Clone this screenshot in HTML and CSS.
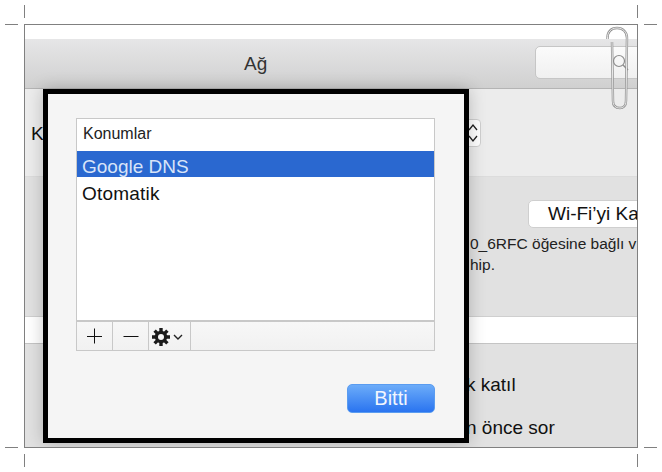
FILE: index.html
```html
<!DOCTYPE html>
<html lang="tr">
<head>
  <meta charset="UTF-8">
  <title>Ağ</title>
  <link rel="stylesheet" href="styles.css">
</head>
<body>
<div class="sheet">
  <!-- kesim izleri -->
  <span class="mark v tl"></span><span class="mark h tl2"></span>
  <span class="mark v tr"></span><span class="mark h tr2"></span>
  <span class="mark v bl"></span><span class="mark h bl2"></span>
  <span class="mark v br"></span><span class="mark h br2"></span>

  <div class="frame">
    <div class="window">
      <div class="titlebar">
        <div class="title">Ağ</div>
        <div class="search">
          <svg width="20" height="20" viewBox="0 0 20 20"><circle cx="8" cy="8" r="5.5" fill="none" stroke="#8c8c8c" stroke-width="1.2"/><path d="M12 12l5 5" stroke="#8c8c8c" stroke-width="1.4"/></svg>
        </div>
      </div>

      <div class="location-row">
        <span class="location-label">Ko</span>
        <div class="stepper">
          <svg width="10" height="22" viewBox="0 0 10 22"><path d="M1 8l4-5 4 5M1 14l4 5 4-5" fill="none" stroke="#222" stroke-width="1.3"/></svg>
        </div>
      </div>

      <div class="panel">
        <div class="wifi-row"><button class="wifi-btn">Wi-Fi’yi Ka</button></div>
        <p class="status">0_6RFC öğesine bağlı v</p>
        <p class="status status-2">hip.</p>
        <div class="white-strip"></div>
        <p class="option option-1">k katıl</p>
        <p class="option option-2">n önce sor</p>
      </div>
    </div>

    <!-- Konumlar penceresi -->
    <div class="dialog">
      <div class="list">
        <div class="list-head">Konumlar</div>
        <div class="list-item selected">Google DNS</div>
        <div class="list-item">Otomatik</div>
        <div class="list-fill"></div>
        <div class="toolbar">
          <div class="tool">
            <svg width="18" height="18" viewBox="0 0 18 18"><path d="M8.5 1.5v15M1 9.5h15" stroke="#111" stroke-width="1"/></svg>
          </div>
          <div class="tool">
            <svg width="18" height="18" viewBox="0 0 18 18"><path d="M1.5 9.5h15" stroke="#111" stroke-width="1"/></svg>
          </div>
          <div class="tool tool-gear">
            <svg width="20" height="20" viewBox="0 0 20 20">
              <g stroke="#1a1a1a" stroke-width="3.4">
                <path d="M10 1v18M1 10h18M3.6 3.6l12.8 12.8M16.4 3.6L3.6 16.4"/>
              </g>
              <circle cx="10" cy="10" r="6.2" fill="#1a1a1a"/>
              <circle cx="10" cy="10" r="3" fill="#f5f5f5"/>
            </svg>
            <svg width="10" height="7" viewBox="0 0 10 7"><path d="M1 1l4 4 4-4" fill="none" stroke="#222" stroke-width="1.4"/></svg>
          </div>
        </div>
      </div>
      <div class="actions"><button class="done-btn">Bitti</button></div>
    </div>

    <svg class="clip" width="26" height="84" viewBox="0 0 26 84">
      <path d="M2.5 13C2 6 6 2 12 2c6 0 10 4 10 10l-1 63c0 5-3 7-6 7-4 0-7-2-7-7L7 16" fill="none" stroke="#8f8f8f" stroke-width="2.4"/>
      <path d="M2.5 13C2 6 6 2 12 2c6 0 10 4 10 10l-1 63c0 5-3 7-6 7-4 0-7-2-7-7L7 16" fill="none" stroke="#f4f4f4" stroke-width="0.9"/>
    </svg>
  </div>
</div>
</body>
</html>
```

FILE: styles.css
```css
/* genel */
html, body {
  margin: 0;
  padding: 0;
  background: #fff;
}
body {
  font-family: "Liberation Sans", Arial, sans-serif;
  color: #111;
  overflow: hidden;
}
.sheet {
  position: relative;
  width: 662px;
  height: 472px;
  padding: 24px 0 0 24px;
  box-sizing: border-box;
}

/* kesim izleri */
.mark {
  position: absolute;
  background: #808080;
}
.mark.v { width: 1px; height: 13px; }
.mark.h { width: 13px; height: 1px; }
.tl { left: 24px; top: 5px; }
.tr { left: 637px; top: 5px; }
.bl { left: 24px; top: 454px; }
.br { left: 637px; top: 454px; }
.tl2 { left: 5px; top: 24px; }
.tr2 { left: 644px; top: 24px; }
.bl2 { left: 5px; top: 447px; }
.br2 { left: 644px; top: 447px; }

/* çerçeve */
.frame {
  position: relative;
  width: 612px;
  height: 422px;
  border: 1px solid #808080;
  background: #fff;
  overflow: hidden;
}
.window {
  padding-top: 14px;
  height: 100%;
  box-sizing: border-box;
  display: flex;
  flex-direction: column;
}
.titlebar {
  height: 49px;
  flex: none;
  display: flex;
  align-items: center;
  justify-content: flex-end;
  position: relative;
  background: linear-gradient(#e6e6e7, #d0d0d0);
  border-bottom: 1px solid #b4b4b4;
}
.title {
  position: absolute;
  left: 219px;
  top: 14px;
  font-size: 19px;
  color: #333;
}
.search {
  width: 108px;
  height: 33px;
  margin-right: -6px;
  margin-top: -3px;
  box-sizing: border-box;
  padding: 6px 0 0 75px;
  background: linear-gradient(#fbfbfb, #f0f0f0);
  border: 1px solid #c6c6c6;
  border-radius: 5px;
}
.location-row {
  height: 88px;
  flex: none;
  display: flex;
  justify-content: space-between;
  box-sizing: border-box;
  padding: 30px 0 0 6px;
  background: #ececec;
  border-bottom: 1px solid #dcdcdc;
}
.location-label {
  font-size: 19px;
  line-height: 30px;
}
.stepper {
  width: 30px;
  height: 28px;
  margin-right: 156px;
  display: flex;
  align-items: center;
  justify-content: flex-end;
  padding-right: 2px;
  box-sizing: border-box;
  background: #fff;
  border: 1px solid #cfcfcf;
  border-radius: 4px;
}
.panel {
  flex: 1;
  background: #e1e1e1;
  padding-top: 23px;
}
.wifi-row {
  height: 28px;
  padding-left: 503px;
}
.wifi-btn {
  width: 140px;
  height: 28px;
  padding: 0 0 0 19px;
  text-align: left;
  font: 19px "Liberation Sans", Arial, sans-serif;
  white-space: nowrap;
  color: #111;
  background: #fff;
  border: 1px solid #cfcfcf;
  border-radius: 5px;
}
.status {
  margin: 5px 0 0 445px;
  font-size: 15.5px;
  line-height: 21px;
  white-space: nowrap;
  color: #222;
}
.status-2 {
  margin-top: 0;
}
.white-strip {
  height: 26px;
  margin-top: 41px;
  background: #fff;
  border-top: 1px solid #cfcfcf;
  border-bottom: 1px solid #c4c4c4;
}
.option {
  margin: 0;
  font-size: 19px;
  line-height: 24px;
  white-space: nowrap;
}
.option-1 {
  margin: 29px 0 0 441px;
}
.option-2 {
  margin: 19px 0 0 441px;
}

/* Konumlar penceresi */
.dialog {
  position: absolute;
  left: 18px;
  top: 64px;
  width: 426px;
  height: 354px;
  box-sizing: border-box;
  padding: 24px 29px 0 28px;
  background: #f5f5f5;
  border: 5px solid #000;
  box-shadow: 0 0 16px rgba(0, 0, 0, 0.22);
}
.list {
  height: 233px;
  box-sizing: border-box;
  display: flex;
  flex-direction: column;
  background: #fff;
  border: 1px solid #c8c8c8;
}
.list-head {
  height: 32px;
  flex: none;
  padding-left: 6px;
  box-sizing: border-box;
  font-size: 16px;
  line-height: 30px;
  color: #222;
}
.list-item {
  height: 27px;
  flex: none;
  padding-left: 5px;
  font-size: 19px;
  line-height: 34px;
  letter-spacing: 0.2px;
  color: #111;
}
.list-item.selected {
  height: 26px;
  line-height: 32px;
  letter-spacing: 0;
  background: #2a68d0;
  color: #d8e4f8;
}
.list-fill {
  flex: 1;
}
.toolbar {
  height: 28px;
  flex: none;
  display: flex;
  background: linear-gradient(#f7f7f7, #f1f1f1);
  border-top: 2px solid #c8c8c8;
}
.tool {
  width: 35px;
  display: flex;
  align-items: center;
  justify-content: center;
  border-right: 1px solid #c8c8c8;
}
.tool-gear {
  width: 41px;
  gap: 2px;
  justify-content: flex-start;
  padding: 2px 0 0 2px;
  box-sizing: content-box;
  width: 39px;
}

.actions {
  display: flex;
  justify-content: flex-end;
  margin-top: 33px;
}
.done-btn {
  width: 88px;
  height: 29px;
  font: 20px "Liberation Sans", Arial, sans-serif;
  color: #f2f6fe;
  background: linear-gradient(#6cacf9, #2a74f0);
  border: 1px solid #5a9cf0;
  border-radius: 5px;
}

/* ataş */
.clip {
  position: absolute;
  left: 580px;
  top: 1px;
}
```
